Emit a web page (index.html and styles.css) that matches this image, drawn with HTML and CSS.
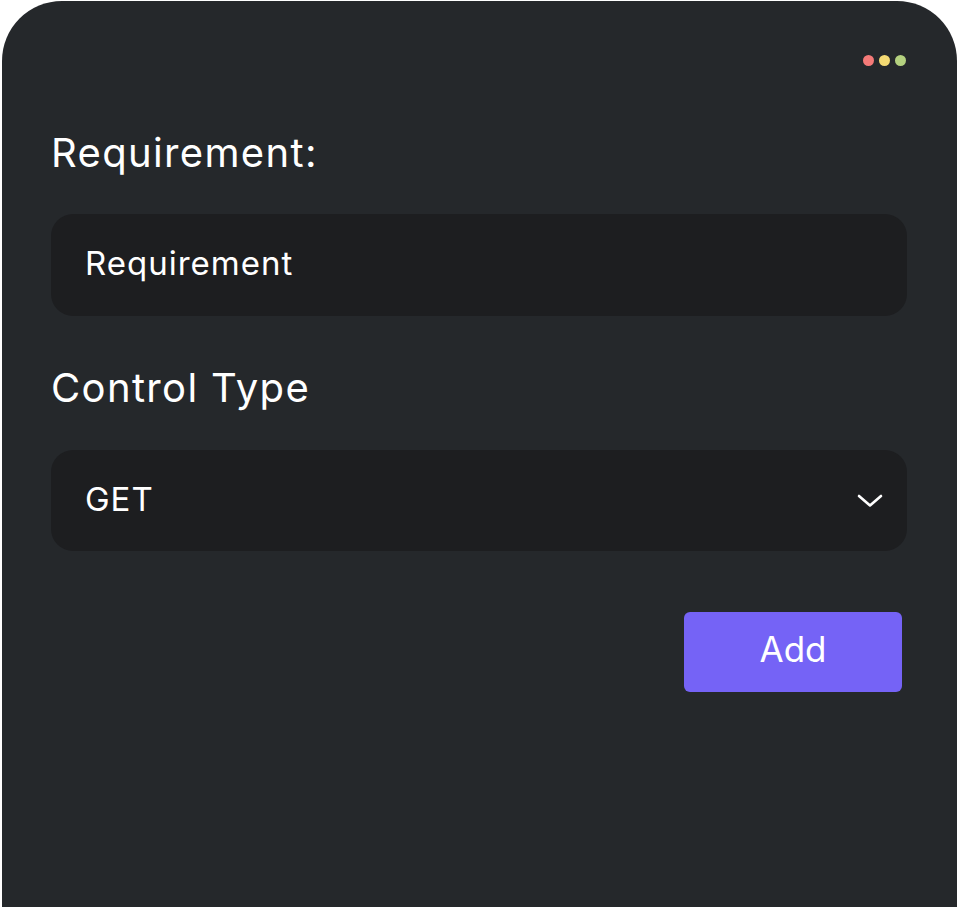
FILE: index.html
```html
<!DOCTYPE html>
<html lang="en">
<head>
<meta charset="utf-8">
<title>Add Requirement</title>
<link rel="stylesheet" href="styles.css">
</head>
<body>
<div class="panel">
  <div class="dots">
    <span class="dot dot-red"></span>
    <span class="dot dot-yellow"></span>
    <span class="dot dot-green"></span>
  </div>
  <form class="form">
    <label class="label label-req" for="req">Requirement:</label>
    <div class="field">
      <input id="req" class="field-input" type="text" placeholder="Requirement">
    </div>
    <label class="label label-type" for="type">Control Type</label>
    <div class="field field-select">
      <span class="select-value">GET</span>
      <svg class="chevron" width="26" height="14" viewBox="0 0 26 14"><path d="M2 2 L13 11.5 L24 2" fill="none" stroke="#ffffff" stroke-width="2.6" stroke-linecap="round" stroke-linejoin="round"/></svg>
    </div>
    <div class="actions">
      <button class="btn-add" type="button">Add</button>
    </div>
  </form>
</div>
</body>
</html>
```

FILE: styles.css
```css
html, body {
  margin: 0;
  padding: 0;
  background: #ffffff;
}
body {
  font-family: "Inter", "Noto Sans", sans-serif;
  overflow: hidden;
  height: 907px;
}
.panel {
  margin: 1px 0 0 2px;
  width: 955px;
  height: 1000px;
  box-sizing: border-box;
  background: #25282b;
  border-radius: 60px 60px 0 0;
  padding: 54px 50px 0 49px;
}
.dots {
  display: flex;
  justify-content: flex-end;
  gap: 5px;
  height: 11px;
  padding-right: 1px;
}
.dot {
  width: 11px;
  height: 11px;
  border-radius: 50%;
  display: block;
}
.dot-red { background: #f57a78; }
.dot-yellow { background: #f4da73; }
.dot-green { background: #b4d17f; }
.form {
  display: flex;
  flex-direction: column;
  margin: 0;
}
.label {
  color: #ffffff;
  font-size: 40px;
  line-height: 48px;
  font-weight: 400;
  letter-spacing: 1.35px;
}
.label-req { margin-top: 63px; }
.label-type { margin-top: 48px; }
.field {
  margin-top: 37px;
  height: 102px;
  background: #1d1e20;
  border-radius: 22px;
  display: flex;
  align-items: center;
  padding: 0 24px 0 34px;
  box-sizing: border-box;
}
.field-select {
  height: 101px;
  margin-top: 38px;
  justify-content: space-between;
}
.field-input {
  flex: 1;
  background: transparent;
  border: none;
  outline: none;
  color: #ffffff;
  font-family: inherit;
  font-size: 33px;
  letter-spacing: 1px;
  padding: 0;
  margin-top: -4px;
}
.field-input::placeholder {
  color: #ffffff;
  opacity: 1;
}
.select-value {
  color: #ffffff;
  font-size: 33px;
  letter-spacing: 1px;
  margin-top: -4px;
}
.chevron { display: block; }
.actions {
  display: flex;
  justify-content: flex-end;
  margin-top: 61px;
  padding-right: 5px;
}
.btn-add {
  width: 218px;
  height: 80px;
  background: #7563f6;
  color: #ffffff;
  border: none;
  border-radius: 6px;
  font-family: inherit;
  font-size: 35px;
  padding: 0 0 6px;
  cursor: pointer;
}
```
